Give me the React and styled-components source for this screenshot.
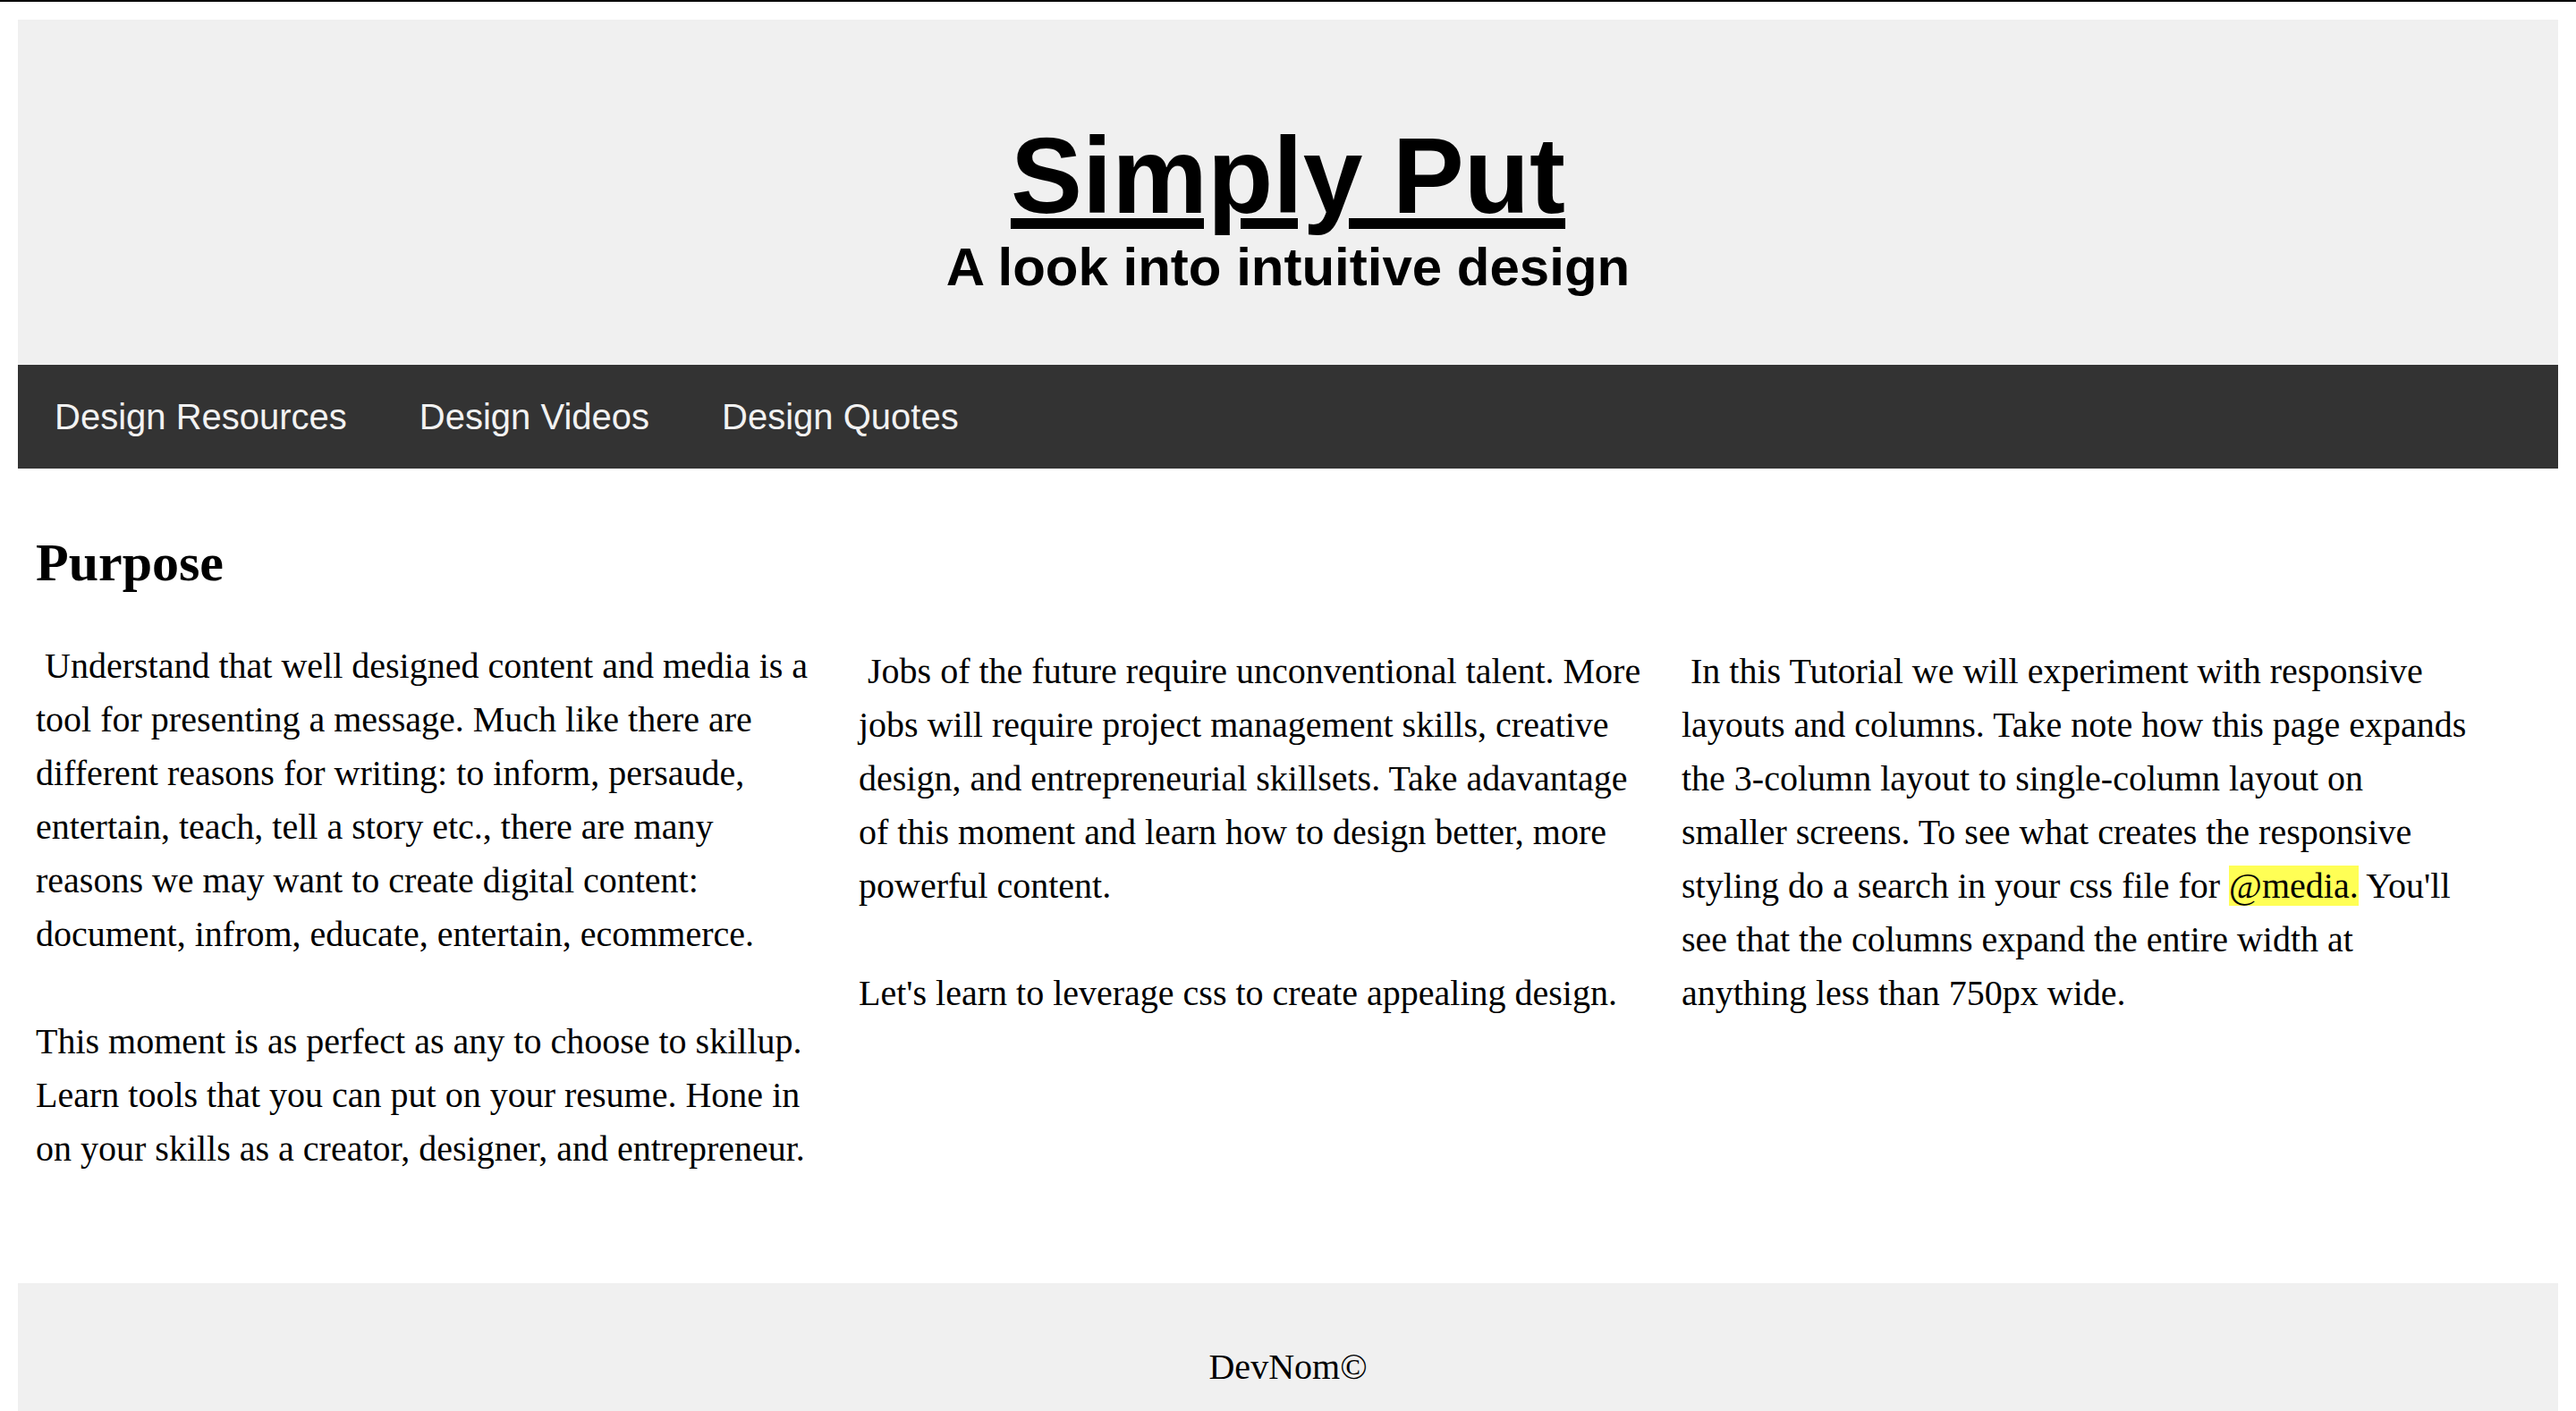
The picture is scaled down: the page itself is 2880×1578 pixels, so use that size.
import React from "react";
import styled, { createGlobalStyle } from "styled-components";

const GlobalStyle = createGlobalStyle`
  html, body {
    margin: 0;
    padding: 0;
    background: #ffffff;
  }
  body {
    font-family: "Liberation Serif", "Times New Roman", serif;
    color: #000000;
  }
`;

const TopRule = styled.div`
  height: 2px;
  background: #000000;
`;

const Page = styled.div`
  padding: 20px 20px 0 20px;
`;

const Header = styled.header`
  background: #f0f0f0;
  display: flex;
  flex-direction: column;
  align-items: center;
  padding: 114px 0 79px 0;
  font-family: "Liberation Sans", Arial, sans-serif;
  font-weight: 700;
`;

const Title = styled.h1`
  margin: 0;
  font-size: 120px;
  line-height: 120px;
  font-weight: 700;
  text-decoration: underline;
  text-decoration-thickness: 12px;
  text-underline-offset: 6px;
`;

const Subtitle = styled.div`
  margin-top: 13px;
  font-size: 60px;
  line-height: 60px;
`;

const Nav = styled.nav`
  background: #333333;
  height: 116px;
  display: flex;
  align-items: center;
`;

const NavLink = styled.a`
  padding: 0 40px 0 41px;
  color: #f2f2f2;
  text-decoration: none;
  font-family: "Liberation Sans", Arial, sans-serif;
  font-size: 40px;
  cursor: pointer;
`;

const Main = styled.main`
  padding: 0 20px;
`;

const Heading = styled.h2`
  margin: 60px 0 0 0;
  font-size: 60px;
  line-height: 90px;
  font-weight: 700;
`;

const Columns = styled.div`
  display: grid;
  grid-template-columns: 880px 880px 880px;
  column-gap: 40px;
  margin-top: 41px;
  align-items: start;
`;

const Column = styled.p`
  margin: 0;
  padding-top: ${(p) => (p.$offset ? "6px" : "0")};
  font-size: 40px;
  line-height: 60px;
`;

const Mark = styled.span`
  background: #ffff55;
`;

const Footer = styled.footer`
  margin-top: 120px;
  background: #f0f0f0;
  padding: 64px 0 60px 0;
  text-align: center;
  font-size: 40px;
  line-height: 60px;
`;

export default function App() {
  return (
    <>
      <GlobalStyle />
      <TopRule />
      <Page>
        <Header>
          <Title>Simply Put</Title>
          <Subtitle>A look into intuitive design</Subtitle>
        </Header>
        <Nav>
          <NavLink>Design Resources</NavLink>
          <NavLink>Design Videos</NavLink>
          <NavLink>Design Quotes</NavLink>
        </Nav>
        <Main>
          <Heading>Purpose</Heading>
          <Columns>
            <Column>
              {"\u00a0"}Understand that well designed content and media is a tool for
              presenting a message. Much like there are different reasons for
              writing: to inform, persaude, entertain, teach, tell a story etc.,
              there are many reasons we may want to create digital content:
              document, infrom, educate, entertain, ecommerce.
              <br />
              <br />
              This moment is as perfect as any to choose to skillup. Learn tools
              that you can put on your resume. Hone in on your skills as a
              creator, designer, and entrepreneur.
            </Column>
            <Column $offset>
              {"\u00a0"}Jobs of the future require unconventional talent. More jobs
              will require project management skills, creative design, and
              entrepreneurial skillsets. Take adavantage of this moment and learn
              how to design better, more powerful content.
              <br />
              <br />
              Let's learn to leverage css to create appealing design.
            </Column>
            <Column $offset>
              {"\u00a0"}In this Tutorial we will experiment with responsive layouts
              and columns. Take note how this page expands the 3-column layout to
              single-column layout on smaller screens. To see what creates the
              responsive styling do a search in your css file for{" "}
              <Mark>@media.</Mark> You'll see that the columns expand the entire
              width at anything less than 750px wide.
            </Column>
          </Columns>
        </Main>
        <Footer>DevNom©</Footer>
      </Page>
    </>
  );
}
